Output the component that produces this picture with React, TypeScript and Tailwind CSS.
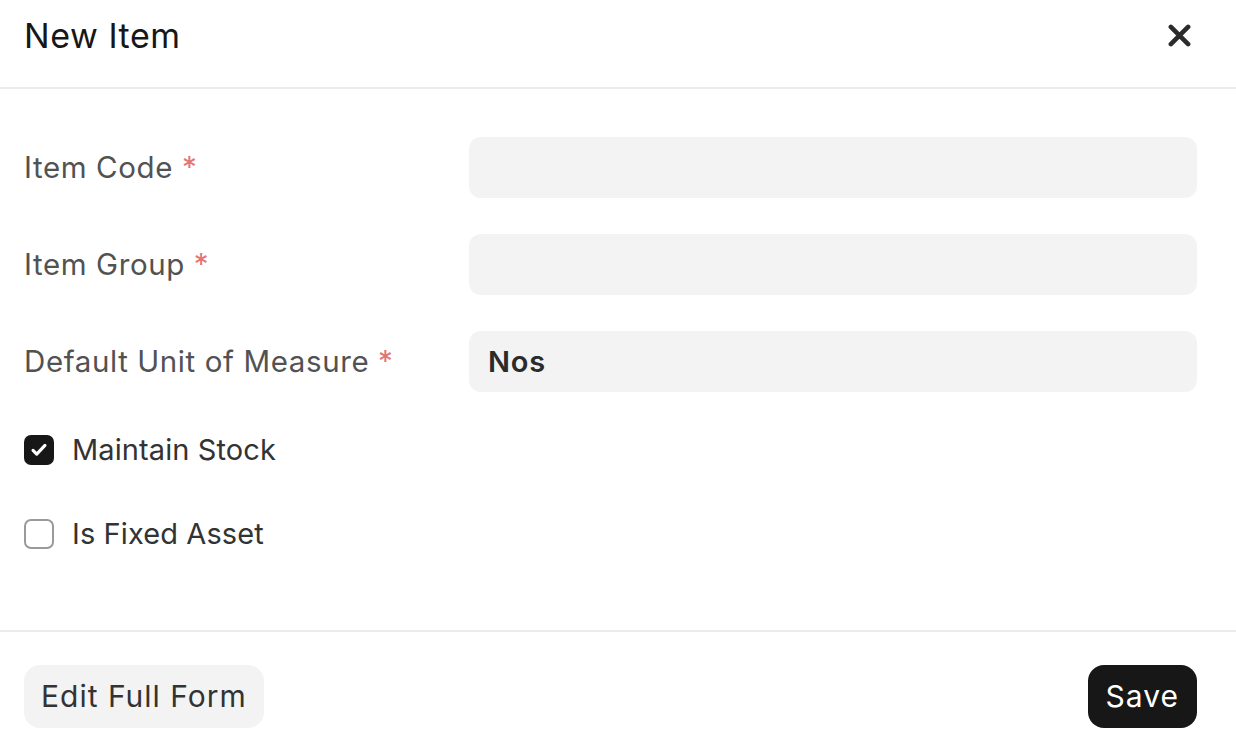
import React, { useState } from 'react';

const fields = [
  { label: 'Item Code', value: '' },
  { label: 'Item Group', value: '' },
  { label: 'Default Unit of Measure', value: 'Nos' },
];

const Checkbox: React.FC<{ checked: boolean; onChange: () => void; label: string }> = ({ checked, onChange, label }) => (
  <label className="flex items-center h-[84px] cursor-pointer" onClick={onChange}>
    <span
      className={`w-[30px] h-[30px] rounded-[7px] flex items-center justify-center ${
        checked ? 'bg-[#171717]' : 'bg-white border-2 border-[#9a9a9a]'
      }`}
    >
      {checked && (
        <svg width="22" height="22" viewBox="0 0 24 24" fill="none" stroke="white" strokeWidth="3.4" strokeLinecap="round" strokeLinejoin="round">
          <path d="M5.5 12.5l4 4L18.5 7" />
        </svg>
      )}
    </span>
    <span className="ml-[18px] text-[29px] text-[#333333] tracking-[0.1px]">{label}</span>
  </label>
);

const App: React.FC = () => {
  const [maintainStock, setMaintainStock] = useState(true);
  const [fixedAsset, setFixedAsset] = useState(false);

  return (
    <div className="w-[1236px] h-[750px] bg-white overflow-hidden font-['Inter','Liberation_Sans',sans-serif]">
      {/* Header */}
      <div className="h-[89px] flex items-center justify-between pl-6 pr-[45px] border-b-2 border-[#ebebeb]">
        <h1 className="text-[34px] text-[#171717] font-normal tracking-[0.55px] -mt-[16px]">New Item</h1>
        <button className="-mt-[16px]">
          <svg width="23" height="23" viewBox="0 0 24 24" fill="none" stroke="#2b2b2b" strokeWidth="4.8" strokeLinecap="round">
            <path d="M3 3l18 18M21 3L3 21" />
          </svg>
        </button>
      </div>

      {/* Body */}
      <div className="pl-6 pr-[39px] pt-[48px]">
        <div className="flex flex-col gap-[36px]">
          {fields.map((f) => (
            <div key={f.label} className="flex items-center">
              <div className="w-[445px] text-[29.5px] text-[#525252] tracking-[0.6px]">
                {f.label} <span className="text-[#e57373]">*</span>
              </div>
              <div className="flex-1 h-[61px] bg-[#f3f3f3] rounded-[12px] flex items-center px-[19px] text-[29px] font-semibold text-[#2b2b2b] tracking-[0.8px]">
                {f.value}
              </div>
            </div>
          ))}
        </div>

        <div className="mt-[16px]">
          <Checkbox checked={maintainStock} onChange={() => setMaintainStock(!maintainStock)} label="Maintain Stock" />
          <Checkbox checked={fixedAsset} onChange={() => setFixedAsset(!fixedAsset)} label="Is Fixed Asset" />
        </div>
      </div>

      {/* Footer */}
      <div className="mt-[54px] border-t-2 border-[#ebebeb] pl-6 pr-[39px] pt-[33px] flex items-center justify-between">
        <button className="h-[63px] px-[17px] bg-[#f3f3f3] rounded-[16px] text-[30px] text-[#333333] tracking-[1px]">
          Edit Full Form
        </button>
        <button className="h-[63px] px-[18px] bg-[#171717] rounded-[16px] text-[30px] text-white tracking-[1px]">
          Save
        </button>
      </div>
    </div>
  );
};

export default App;
